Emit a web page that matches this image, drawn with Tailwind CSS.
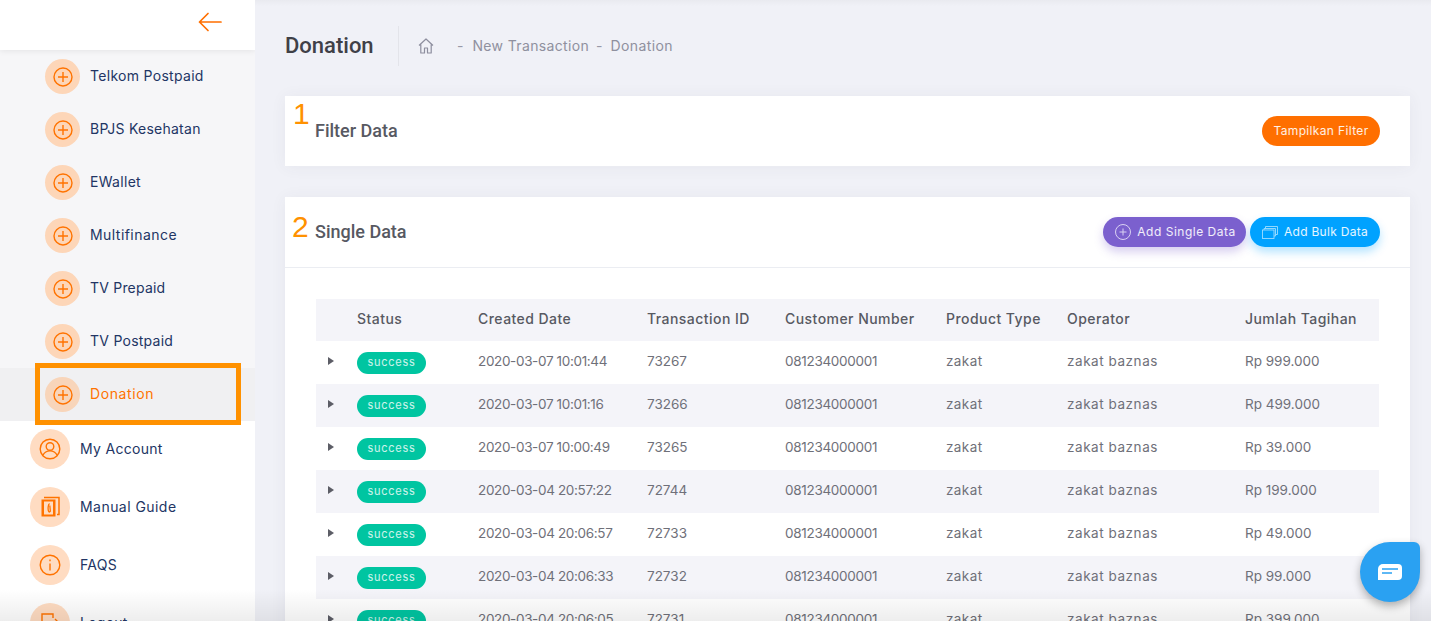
<!DOCTYPE html>
<html>
<head>
<meta charset="utf-8">
<script src="https://cdn.jsdelivr.net/npm/@tailwindcss/browser@4"></script>
</head>
<body class="w-[1431px] h-[621px] overflow-hidden bg-[#f0f1f7] font-['Inter',sans-serif]">
<div class="relative flex w-[1431px] h-[621px] overflow-hidden">
  <!-- Sidebar -->
  <aside class="w-[255px] h-full shrink-0 bg-white flex flex-col overflow-hidden">
    <div class="relative z-10 h-[50px] shrink-0 flex items-center justify-end pr-[33px] pb-[6px] bg-white shadow-[0_1px_6px_rgba(0,0,0,0.08)]">
      <svg width="24" height="20" viewBox="0 0 24 20" fill="none" stroke="#ff6f00" stroke-width="1.7" stroke-linecap="round" stroke-linejoin="round"><path d="M1.5 10H23M10 1.5L1.5 10l8.5 8.5"/></svg>
    </div>
    <div class="bg-[#f6f6f8] flex flex-col shrink-0">
      <div class="h-[53px] flex items-center pl-[45px] gap-[10px]"><span class="w-[35px] h-[35px] rounded-full bg-[#fdd6b8] flex items-center justify-center"><svg width="20" height="20" viewBox="0 0 20 20" fill="none" stroke="#ff7300" stroke-width="1.4"><circle cx="10" cy="10" r="9"/><path d="M10 5v10M5 10h10"/></svg></span><span class="pb-[2px] text-[14px] tracking-[0.3px] text-[#223564]">Telkom Postpaid</span></div>
      <div class="h-[53px] flex items-center pl-[45px] gap-[10px]"><span class="w-[35px] h-[35px] rounded-full bg-[#fdd6b8] flex items-center justify-center"><svg width="20" height="20" viewBox="0 0 20 20" fill="none" stroke="#ff7300" stroke-width="1.4"><circle cx="10" cy="10" r="9"/><path d="M10 5v10M5 10h10"/></svg></span><span class="pb-[2px] text-[14px] tracking-[0.25px] text-[#223564]">BPJS Kesehatan</span></div>
      <div class="h-[53px] flex items-center pl-[45px] gap-[10px]"><span class="w-[35px] h-[35px] rounded-full bg-[#fdd6b8] flex items-center justify-center"><svg width="20" height="20" viewBox="0 0 20 20" fill="none" stroke="#ff7300" stroke-width="1.4"><circle cx="10" cy="10" r="9"/><path d="M10 5v10M5 10h10"/></svg></span><span class="pb-[2px] text-[14px] tracking-[0.3px] text-[#223564]">EWallet</span></div>
      <div class="h-[53px] flex items-center pl-[45px] gap-[10px]"><span class="w-[35px] h-[35px] rounded-full bg-[#fdd6b8] flex items-center justify-center"><svg width="20" height="20" viewBox="0 0 20 20" fill="none" stroke="#ff7300" stroke-width="1.4"><circle cx="10" cy="10" r="9"/><path d="M10 5v10M5 10h10"/></svg></span><span class="pb-[2px] text-[14px] tracking-[0.45px] text-[#223564]">Multifinance</span></div>
      <div class="h-[53px] flex items-center pl-[45px] gap-[10px]"><span class="w-[35px] h-[35px] rounded-full bg-[#fdd6b8] flex items-center justify-center"><svg width="20" height="20" viewBox="0 0 20 20" fill="none" stroke="#ff7300" stroke-width="1.4"><circle cx="10" cy="10" r="9"/><path d="M10 5v10M5 10h10"/></svg></span><span class="pb-[2px] text-[14px] tracking-[0.2px] text-[#223564]">TV Prepaid</span></div>
      <div class="h-[53px] flex items-center pl-[45px] gap-[10px]"><span class="w-[35px] h-[35px] rounded-full bg-[#fdd6b8] flex items-center justify-center"><svg width="20" height="20" viewBox="0 0 20 20" fill="none" stroke="#ff7300" stroke-width="1.4"><circle cx="10" cy="10" r="9"/><path d="M10 5v10M5 10h10"/></svg></span><span class="pb-[2px] text-[14px] tracking-[0.25px] text-[#223564]">TV Postpaid</span></div>
      <div class="h-[53px] flex items-center pl-[45px] gap-[10px] bg-[#f0f0f2]"><span class="w-[35px] h-[35px] rounded-full bg-[#f8d5ba] flex items-center justify-center"><svg width="20" height="20" viewBox="0 0 20 20" fill="none" stroke="#ff7300" stroke-width="1.4"><circle cx="10" cy="10" r="9"/><path d="M10 5v10M5 10h10"/></svg></span><span class="pb-[2px] text-[14px] tracking-[0.6px] text-[#ff7300]">Donation</span></div>
    </div>
    <div class="flex flex-col pl-[30px] pt-[8px] gap-[18px]">
      <div class="h-[40px] shrink-0 flex items-center gap-[10px]"><span class="w-[40px] h-[40px] rounded-full bg-[#ffdcc2] flex items-center justify-center"><svg width="22" height="22" viewBox="0 0 22 22" fill="none" stroke="#ff7300" stroke-width="1.4"><circle cx="11" cy="11" r="9.8"/><circle cx="11" cy="8.5" r="3.8"/><path d="M3.8 17.5c1.5-3 4-4.6 7.2-4.6s5.700 1.600 7.200 4.600"/></svg></span><span class="pb-[2px] text-[14px] tracking-[0.3px] text-[#223564]">My Account</span></div>
      <div class="h-[40px] shrink-0 flex items-center gap-[10px]"><span class="w-[40px] h-[40px] rounded-full bg-[#ffdcc2] flex items-center justify-center"><svg width="20" height="22" viewBox="0 0 20 22" fill="none" stroke="#ff7300"><path d="M4 1.500h15v17h-2" stroke-width="1.500"/><rect x="1.500" y="3.500" width="14" height="17" fill="#ff7300" stroke="none"/><rect x="4" y="5.500" width="9" height="13" fill="#ffdcc2" stroke="none"/><path d="M9.500 7.500c-1.500 1-1.800 6-.8 8 .8 1 1.800.2 1.600-1l-.5-5" stroke-width="1.300"/></svg></span><span class="pb-[2px] text-[14px] tracking-[0.45px] text-[#223564]">Manual Guide</span></div>
      <div class="h-[40px] shrink-0 flex items-center gap-[10px]"><span class="w-[40px] h-[40px] rounded-full bg-[#ffdcc2] flex items-center justify-center"><svg width="22" height="22" viewBox="0 0 22 22" fill="none" stroke="#ff7300" stroke-width="1.400"><circle cx="11" cy="11" r="9.800"/><path d="M11 9.500v7M11 5.500v1.800"/></svg></span><span class="pb-[2px] text-[14px] tracking-[0.25px] text-[#223564]">FAQS</span></div>
      <div class="h-[40px] shrink-0 flex items-center gap-[10px]"><span class="w-[40px] h-[40px] rounded-full bg-[#ffdcc2] flex items-center justify-center"><svg width="22" height="22" viewBox="0 0 22 22" fill="none" stroke="#ff7300" stroke-width="1.400"><path d="M14 6V2H3v18h11v-4M9 11h11M16 7l4 4-4 4"/></svg></span><span class="pb-[2px] text-[14px] tracking-[0.25px] text-[#223564]">Logout</span></div>
    </div>
  </aside>

  <!-- Main -->
  <main class="flex-1 min-w-0 pl-[30px] pr-[21px] flex flex-col">
    <div class="h-[40px] shrink-0 mt-[26px] flex items-center">
      <h1 class="w-[114px] h-full flex items-center border-r border-[#e3e4ea] text-[22px] leading-none font-medium text-[#3f4047] font-['Roboto',sans-serif]">Donation</h1>
      <svg class="ml-[19px]" width="16" height="16" viewBox="0 0 16 16" fill="none" stroke="#8d8e9e" stroke-width="1.200" stroke-linejoin="round"><path d="M1 7.500L8 1l7 6.500M2.800 6.500V15h3.700v-5h3v5h3.700V6.500"/></svg>
      <span class="ml-[23px] pb-[2px] text-[14px] text-[#9899a8]">-</span>
      <span class="ml-[9px] pb-[2px] text-[14px] tracking-[0.35px] text-[#8f909e]">New Transaction</span>
      <span class="ml-[7px] pb-[2px] text-[14px] text-[#9899a8]">-</span>
      <span class="ml-[8px] pb-[2px] text-[14px] tracking-[0.4px] text-[#8f909e]">Donation</span>
    </div>

    <section class="mt-[30px] h-[70px] shrink-0 bg-white shadow-[0_1px_15px_rgba(69,65,78,0.06)] flex items-center justify-between pl-[30px] pr-[30px]">
      <h2 class="pb-[2px] text-[18px] font-medium text-[#575962] font-['Roboto',sans-serif]">Filter Data</h2>
      <button class="h-[30px] w-[118px] rounded-full bg-[#ff6f00] text-white/90 text-[12px] tracking-[0.35px]">Tampilkan Filter</button>
    </section>

    <section class="mt-[31px] h-[500px] shrink-0 bg-white shadow-[0_1px_15px_rgba(69,65,78,0.06)]">
      <div class="h-[71px] border-b border-[#ebedf2] flex items-center justify-between pl-[30px] pr-[30px]">
        <h2 class="pb-[2px] text-[18px] font-medium text-[#575962] font-['Roboto',sans-serif]">Single Data</h2>
        <div class="flex gap-[4px]">
          <button class="h-[30px] w-[143px] pl-[2px] rounded-full bg-[#7b60ce] text-white/90 text-[12px] tracking-[0.5px] flex items-center justify-center gap-[6px] shadow-[0_5px_10px_rgba(123,96,206,0.3)]"><svg width="16" height="16" viewBox="0 0 16 16" fill="none" stroke="#d9d1f2" stroke-width="1"><circle cx="8" cy="8" r="7.500"/><path d="M8 4.500v7M4.500 8h7"/></svg>Add Single Data</button>
          <button class="h-[30px] w-[130px] rounded-full bg-[#00a2ff] text-white/90 text-[12px] tracking-[0.3px] flex items-center justify-center gap-[6px] shadow-[0_5px_10px_rgba(0,162,255,0.3)]"><svg width="16" height="13" viewBox="0 0 16 13" fill="none" stroke="#9fdcff" stroke-width="0.900"><path d="M3.500 2.500V.5h12v8h-2"/><path d="M2 4V2.500h11.500V10h-1.500"/><rect x=".5" y="4" width="11.500" height="8.500"/></svg>Add Bulk Data</button>
        </div>
      </div>
      <div class="ml-[31px] mr-[31px] mt-[31px] text-[13.5px] text-[#6f7079]">
        <div class="grid grid-cols-[41px_121px_169px_138px_161px_121px_178px_134px] h-[42px] items-center bg-[#f4f4f9] font-medium text-[14px] tracking-[0.45px] text-[#575962]">
          <span></span><span class="pb-[4px]">Status</span><span class="pb-[4px]">Created Date</span><span class="pb-[4px]">Transaction ID</span><span class="pb-[4px]">Customer Number</span><span class="pb-[4px]">Product Type</span><span class="pb-[4px]">Operator</span><span class="pb-[4px]">Jumlah Tagihan</span>
        </div>
        <div class="grid grid-cols-[41px_121px_169px_138px_161px_121px_178px_134px] h-[43px] items-center bg-white">
          <span class="w-0 h-0 ml-[12px] border-y-[4.500px] border-y-transparent border-l-[6px] border-l-[#5c5d66] mb-[4px]"></span><span class="w-[69px] h-[22px] rounded-full bg-[#00c5a1] text-white/80 text-[11px] tracking-[0.7px] flex items-center justify-center">success</span><span class="pb-[2px] tracking-[-0.35px]">2020-03-07 10:01:44</span><span class="pb-[2px]">73267</span><span class="pb-[2px] tracking-[-0.3px]">081234000001</span><span class="pb-[2px] tracking-[0.4px]">zakat</span><span class="pb-[2px] tracking-[0.55px]">zakat baznas</span><span class="pb-[2px]">Rp 999.000</span>
        </div>
        <div class="grid grid-cols-[41px_121px_169px_138px_161px_121px_178px_134px] h-[43px] items-center bg-[#f4f4f9]">
          <span class="w-0 h-0 ml-[12px] border-y-[4.500px] border-y-transparent border-l-[6px] border-l-[#5c5d66] mb-[4px]"></span><span class="w-[69px] h-[22px] rounded-full bg-[#00c5a1] text-white/80 text-[11px] tracking-[0.7px] flex items-center justify-center">success</span><span class="pb-[2px] tracking-[-0.35px]">2020-03-07 10:01:16</span><span class="pb-[2px]">73266</span><span class="pb-[2px] tracking-[-0.3px]">081234000001</span><span class="pb-[2px] tracking-[0.4px]">zakat</span><span class="pb-[2px] tracking-[0.55px]">zakat baznas</span><span class="pb-[2px]">Rp 499.000</span>
        </div>
        <div class="grid grid-cols-[41px_121px_169px_138px_161px_121px_178px_134px] h-[43px] items-center bg-white">
          <span class="w-0 h-0 ml-[12px] border-y-[4.500px] border-y-transparent border-l-[6px] border-l-[#5c5d66] mb-[4px]"></span><span class="w-[69px] h-[22px] rounded-full bg-[#00c5a1] text-white/80 text-[11px] tracking-[0.7px] flex items-center justify-center">success</span><span class="pb-[2px] tracking-[-0.35px]">2020-03-07 10:00:49</span><span class="pb-[2px]">73265</span><span class="pb-[2px] tracking-[-0.3px]">081234000001</span><span class="pb-[2px] tracking-[0.4px]">zakat</span><span class="pb-[2px] tracking-[0.55px]">zakat baznas</span><span class="pb-[2px]">Rp 39.000</span>
        </div>
        <div class="grid grid-cols-[41px_121px_169px_138px_161px_121px_178px_134px] h-[43px] items-center bg-[#f4f4f9]">
          <span class="w-0 h-0 ml-[12px] border-y-[4.500px] border-y-transparent border-l-[6px] border-l-[#5c5d66] mb-[4px]"></span><span class="w-[69px] h-[22px] rounded-full bg-[#00c5a1] text-white/80 text-[11px] tracking-[0.7px] flex items-center justify-center">success</span><span class="pb-[2px] tracking-[-0.35px]">2020-03-04 20:57:22</span><span class="pb-[2px]">72744</span><span class="pb-[2px] tracking-[-0.3px]">081234000001</span><span class="pb-[2px] tracking-[0.4px]">zakat</span><span class="pb-[2px] tracking-[0.55px]">zakat baznas</span><span class="pb-[2px]">Rp 199.000</span>
        </div>
        <div class="grid grid-cols-[41px_121px_169px_138px_161px_121px_178px_134px] h-[43px] items-center bg-white">
          <span class="w-0 h-0 ml-[12px] border-y-[4.500px] border-y-transparent border-l-[6px] border-l-[#5c5d66] mb-[4px]"></span><span class="w-[69px] h-[22px] rounded-full bg-[#00c5a1] text-white/80 text-[11px] tracking-[0.7px] flex items-center justify-center">success</span><span class="pb-[2px] tracking-[-0.35px]">2020-03-04 20:06:57</span><span class="pb-[2px]">72733</span><span class="pb-[2px] tracking-[-0.3px]">081234000001</span><span class="pb-[2px] tracking-[0.4px]">zakat</span><span class="pb-[2px] tracking-[0.55px]">zakat baznas</span><span class="pb-[2px]">Rp 49.000</span>
        </div>
        <div class="grid grid-cols-[41px_121px_169px_138px_161px_121px_178px_134px] h-[43px] items-center bg-[#f4f4f9]">
          <span class="w-0 h-0 ml-[12px] border-y-[4.500px] border-y-transparent border-l-[6px] border-l-[#5c5d66] mb-[4px]"></span><span class="w-[69px] h-[22px] rounded-full bg-[#00c5a1] text-white/80 text-[11px] tracking-[0.7px] flex items-center justify-center">success</span><span class="pb-[2px] tracking-[-0.35px]">2020-03-04 20:06:33</span><span class="pb-[2px]">72732</span><span class="pb-[2px] tracking-[-0.3px]">081234000001</span><span class="pb-[2px] tracking-[0.4px]">zakat</span><span class="pb-[2px] tracking-[0.55px]">zakat baznas</span><span class="pb-[2px]">Rp 99.000</span>
        </div>
        <div class="grid grid-cols-[41px_121px_169px_138px_161px_121px_178px_134px] h-[43px] items-center bg-white">
          <span class="w-0 h-0 ml-[12px] border-y-[4.500px] border-y-transparent border-l-[6px] border-l-[#5c5d66] mb-[4px]"></span><span class="w-[69px] h-[22px] rounded-full bg-[#00c5a1] text-white/80 text-[11px] tracking-[0.7px] flex items-center justify-center">success</span><span class="pb-[2px] tracking-[-0.35px]">2020-03-04 20:06:05</span><span class="pb-[2px]">72731</span><span class="pb-[2px] tracking-[-0.3px]">081234000001</span><span class="pb-[2px] tracking-[0.4px]">zakat</span><span class="pb-[2px] tracking-[0.55px]">zakat baznas</span><span class="pb-[2px]">Rp 399.000</span>
        </div>
      </div>
    </section>
  </main>

  <!-- Overlays -->
  <div class="absolute left-0 top-0 w-full h-[6px] pointer-events-none bg-gradient-to-t from-transparent to-black/[0.03]"></div>
  <div class="absolute left-0 bottom-0 w-full h-[32px] pointer-events-none bg-gradient-to-b from-transparent to-black/[0.07]"></div>
  <div class="absolute left-[35px] top-[363px] w-[206px] h-[62px] border-[5px] border-[#ff9100] pointer-events-none"></div>
  <span class="absolute left-[293px] top-[97px] text-[30px] leading-[34px] text-[#ff9100] font-['Liberation_Sans',sans-serif]">1</span>
  <span class="absolute left-[292px] top-[210px] text-[30px] leading-[34px] text-[#ff9100] font-['Liberation_Sans',sans-serif]">2</span>
  <div class="absolute left-[1360px] top-[542px] w-[60px] h-[60px] rounded-[50%_10%_50%_50%] bg-[#2aa1f2] shadow-[0_4px_8px_rgba(0,0,0,0.3)] flex items-center justify-center">
    <svg width="24" height="16" viewBox="0 0 24 16"><path d="M5 0h15a4 4 0 0 1 4 4v8a4 4 0 0 1-4 4H0V5a5 5 0 0 1 5-5z" fill="#fff"/><path d="M4 5h16M4 9h10" stroke="#2aa1f2" stroke-width="1.500"/></svg>
  </div>
</div>
</body>
</html>
